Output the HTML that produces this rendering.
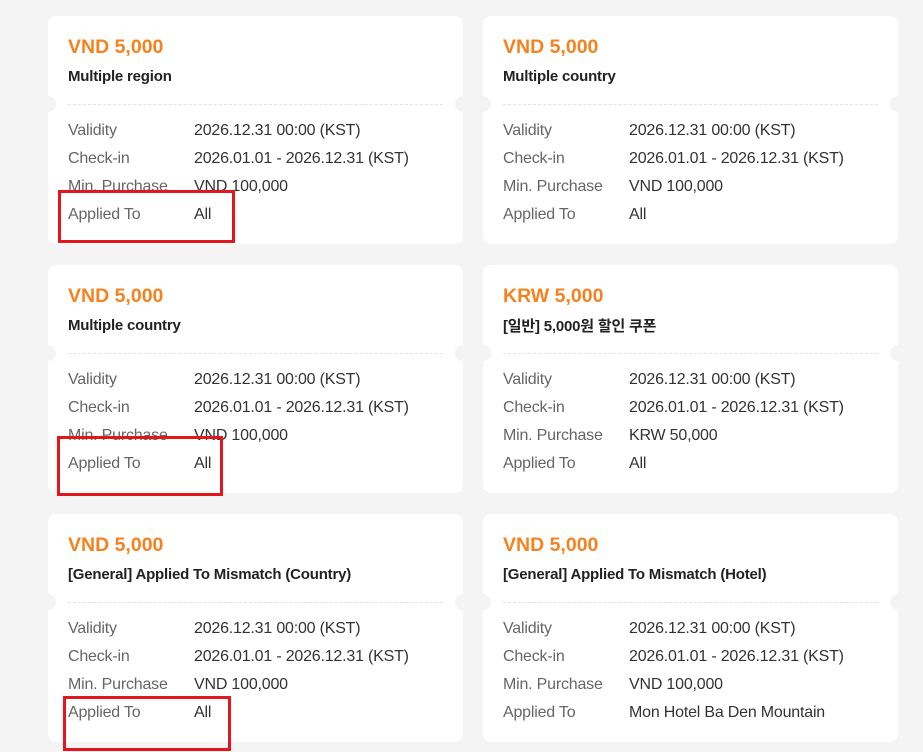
<!DOCTYPE html>
<html><head><meta charset="utf-8"><style>
*{margin:0;padding:0;box-sizing:border-box}
body{width:923px;height:752px;background:#f4f4f4;position:relative;overflow:hidden;font-family:"Liberation Sans","Noto Sans CJK KR",sans-serif}
.card{position:absolute;width:415px;height:228px;background:#fff;border-radius:8px}
.nt{position:absolute;top:80px;width:16px;height:16px;border-radius:50%;background:#f4f4f4}
.nl{left:-8px}.nr{right:-8px}
.p{position:absolute;left:20px;top:20px;font-size:19.5px;font-weight:bold;color:#f5821f}
.t{position:absolute;left:20px;top:52px;font-size:15px;font-weight:bold;color:#222;letter-spacing:-0.2px}
.d{position:absolute;left:20px;right:20px;top:88px;border-top:1px dashed #e2e2e2}
.row{position:absolute;left:20px;font-size:16px;color:#666;white-space:nowrap;letter-spacing:-0.2px}
.row b{font-weight:normal;color:#333;position:absolute;left:126px}
.box{position:absolute;border:3px solid #e3161d}
</style></head><body>
<div class="card" style="left:48px;top:16px"><div class="nt nl"></div><div class="nt nr"></div><div class="p">VND 5,000</div><div class="t">Multiple region</div><div class="d"></div>
<div class="row" style="top:106px">Validity<b>2026.12.31 00:00 (KST)</b></div><div class="row" style="top:134px">Check-in<b>2026.01.01 - 2026.12.31 (KST)</b></div><div class="row" style="top:162px">Min. Purchase<b>VND 100,000</b></div><div class="row" style="top:190px">Applied To<b>All</b></div></div>
<div class="card" style="left:483px;top:16px"><div class="nt nl"></div><div class="nt nr"></div><div class="p">VND 5,000</div><div class="t">Multiple country</div><div class="d"></div>
<div class="row" style="top:106px">Validity<b>2026.12.31 00:00 (KST)</b></div><div class="row" style="top:134px">Check-in<b>2026.01.01 - 2026.12.31 (KST)</b></div><div class="row" style="top:162px">Min. Purchase<b>VND 100,000</b></div><div class="row" style="top:190px">Applied To<b>All</b></div></div>
<div class="card" style="left:48px;top:265px"><div class="nt nl"></div><div class="nt nr"></div><div class="p">VND 5,000</div><div class="t">Multiple country</div><div class="d"></div>
<div class="row" style="top:106px">Validity<b>2026.12.31 00:00 (KST)</b></div><div class="row" style="top:134px">Check-in<b>2026.01.01 - 2026.12.31 (KST)</b></div><div class="row" style="top:162px">Min. Purchase<b>VND 100,000</b></div><div class="row" style="top:190px">Applied To<b>All</b></div></div>
<div class="card" style="left:483px;top:265px"><div class="nt nl"></div><div class="nt nr"></div><div class="p">KRW 5,000</div><div class="t" style="top:50px">[일반] 5,000원 할인 쿠폰</div><div class="d"></div>
<div class="row" style="top:106px">Validity<b>2026.12.31 00:00 (KST)</b></div><div class="row" style="top:134px">Check-in<b>2026.01.01 - 2026.12.31 (KST)</b></div><div class="row" style="top:162px">Min. Purchase<b>KRW 50,000</b></div><div class="row" style="top:190px">Applied To<b>All</b></div></div>
<div class="card" style="left:48px;top:514px"><div class="nt nl"></div><div class="nt nr"></div><div class="p">VND 5,000</div><div class="t">[General] Applied To Mismatch (Country)</div><div class="d"></div>
<div class="row" style="top:106px">Validity<b>2026.12.31 00:00 (KST)</b></div><div class="row" style="top:134px">Check-in<b>2026.01.01 - 2026.12.31 (KST)</b></div><div class="row" style="top:162px">Min. Purchase<b>VND 100,000</b></div><div class="row" style="top:190px">Applied To<b>All</b></div></div>
<div class="card" style="left:483px;top:514px"><div class="nt nl"></div><div class="nt nr"></div><div class="p">VND 5,000</div><div class="t">[General] Applied To Mismatch (Hotel)</div><div class="d"></div>
<div class="row" style="top:106px">Validity<b>2026.12.31 00:00 (KST)</b></div><div class="row" style="top:134px">Check-in<b>2026.01.01 - 2026.12.31 (KST)</b></div><div class="row" style="top:162px">Min. Purchase<b>VND 100,000</b></div><div class="row" style="top:190px">Applied To<b>Mon Hotel Ba Den Mountain</b></div></div>
<div class="box" style="left:58px;top:190px;width:177px;height:53px"></div>
<div class="box" style="left:57px;top:436px;width:166px;height:60px"></div>
<div class="box" style="left:63px;top:696px;width:168px;height:55px"></div>
</body></html>
